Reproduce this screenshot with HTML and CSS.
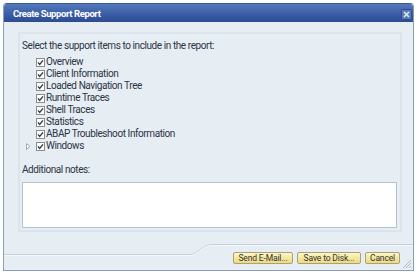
FILE: index.html
```html
<!DOCTYPE html>
<html>
<head>
<meta charset="utf-8">
<link rel="stylesheet" href="styles.css">
</head>
<body>
<div class="dialog">
  <div class="titlebar">
    <span class="title">Create Support Report</span>
    <span class="close">
      <svg width="11" height="11" viewBox="0 0 11 11"><rect x="0.5" y="0.5" width="10" height="10" rx="1" fill="#5a7bb8" stroke="#2f4b8a"/><path d="M3 3 L8 8 M8 3 L3 8" stroke="#dfe7f4" stroke-width="1.6"/></svg>
    </span>
  </div>
  <div class="body">
    <div class="frame">
      <div class="prompt">Select the support items to include in the report:</div>
      <ul class="items">
        <li><span class="exp"></span><span class="cb"><svg width="9" height="9" viewBox="0 0 9 9"><rect x="0.5" y="0.5" width="8" height="8" fill="#fff" stroke="#8c8c8c"/><path d="M2 4.4 L3.7 6.4 L7 2.4" stroke="#333" stroke-width="1.3" fill="none"/></svg></span>Overview</li>
        <li><span class="exp"></span><span class="cb"><svg width="9" height="9" viewBox="0 0 9 9"><rect x="0.5" y="0.5" width="8" height="8" fill="#fff" stroke="#8c8c8c"/><path d="M2 4.4 L3.7 6.4 L7 2.4" stroke="#333" stroke-width="1.3" fill="none"/></svg></span>Client Information</li>
        <li><span class="exp"></span><span class="cb"><svg width="9" height="9" viewBox="0 0 9 9"><rect x="0.5" y="0.5" width="8" height="8" fill="#fff" stroke="#8c8c8c"/><path d="M2 4.4 L3.7 6.4 L7 2.4" stroke="#333" stroke-width="1.3" fill="none"/></svg></span>Loaded Navigation Tree</li>
        <li><span class="exp"></span><span class="cb"><svg width="9" height="9" viewBox="0 0 9 9"><rect x="0.5" y="0.5" width="8" height="8" fill="#fff" stroke="#8c8c8c"/><path d="M2 4.4 L3.7 6.4 L7 2.4" stroke="#333" stroke-width="1.3" fill="none"/></svg></span>Runtime Traces</li>
        <li><span class="exp"></span><span class="cb"><svg width="9" height="9" viewBox="0 0 9 9"><rect x="0.5" y="0.5" width="8" height="8" fill="#fff" stroke="#8c8c8c"/><path d="M2 4.4 L3.7 6.4 L7 2.4" stroke="#333" stroke-width="1.3" fill="none"/></svg></span>Shell Traces</li>
        <li><span class="exp"></span><span class="cb"><svg width="9" height="9" viewBox="0 0 9 9"><rect x="0.5" y="0.5" width="8" height="8" fill="#fff" stroke="#8c8c8c"/><path d="M2 4.4 L3.7 6.4 L7 2.4" stroke="#333" stroke-width="1.3" fill="none"/></svg></span>Statistics</li>
        <li><span class="exp"></span><span class="cb"><svg width="9" height="9" viewBox="0 0 9 9"><rect x="0.5" y="0.5" width="8" height="8" fill="#fff" stroke="#8c8c8c"/><path d="M2 4.4 L3.7 6.4 L7 2.4" stroke="#333" stroke-width="1.3" fill="none"/></svg></span>ABAP Troubleshoot Information</li>
        <li><span class="exp"><svg width="5" height="7" viewBox="0 0 5 7"><path d="M0.5 0.5 L4 3.5 L0.5 6.5 Z" fill="#fff" stroke="#a6a6a6"/></svg></span><span class="cb"><svg width="9" height="9" viewBox="0 0 9 9"><rect x="0.5" y="0.5" width="8" height="8" fill="#fff" stroke="#8c8c8c"/><path d="M2 4.4 L3.7 6.4 L7 2.4" stroke="#333" stroke-width="1.3" fill="none"/></svg></span>Windows</li>
      </ul>
      <div class="notes-label">Additional notes:</div>
      <div class="notes"></div>
    </div>
  </div>
  <div class="footer">
    <svg class="footer-line" width="409" height="38" viewBox="0 0 409 38"><path d="M0 22.5 H186 C194 22.5 198 12.5 208 12.5 H409" fill="none" stroke="#c3cfdc"/><path d="M0 23.5 H186 C194 23.5 198 13.5 208 13.5 H409" fill="none" stroke="#f6f9fb"/></svg>
    <div class="buttons">
      <button class="btn btn-mail">Send E-Mail...</button>
      <button class="btn btn-save">Save to Disk...</button>
      <button class="btn btn-cancel">Cancel</button>
    </div>
    <svg class="grip" width="10" height="10" viewBox="0 0 10 10"><path d="M9 1 L1 9 M9 4 L4 9 M9 7 L7 9" stroke="#aab7c7" stroke-width="1"/></svg>
  </div>
</div>
</body>
</html>
```
FILE: styles.css
```css
html, body {
  margin: 0;
  padding: 0;
  background: #ffffff;
}
body {
  font-family: Roboto, "Liberation Sans", Arial, sans-serif;
  font-size: 10px;
  color: #2b3544;
}
.dialog {
  margin: 3px 0 0 3px;
  width: 409px;
  height: 266px;
  border: 1px solid #8b9dbb;
  border-top-color: #3a5a9e;
  border-radius: 4px 4px 0 0;
  background: #e6edf3;
  display: flex;
  flex-direction: column;
  overflow: hidden;
  position: relative;
}
.titlebar {
  height: 18px;
  flex: none;
  background: linear-gradient(#5379bb, #3b5ea6 55%, #2c4b93);
  display: flex;
  align-items: center;
  justify-content: space-between;
  padding: 0 1px 0 9px;
}
.title {
  color: #ffffff;
  font-weight: bold;
  font-size: 9.5px;
  letter-spacing: -0.4px;
}
.close {
  display: flex;
  margin-top: 3px;
}
.body {
  padding: 10px 11px 0 14px;
  flex: none;
}
.frame {
  border: 2px solid #dbe4ed;
  padding: 6px 3px 2px 2px;
}
.prompt {
  height: 12px;
  line-height: 12px;
  letter-spacing: -0.42px;
}
.items {
  list-style: none;
  margin: 4px 0 0 0;
  padding: 0;
}
.items li {
  height: 12px;
  line-height: 12px;
  display: flex;
  align-items: center;
  letter-spacing: -0.42px;
}
.exp {
  width: 14px;
  flex: none;
  display: flex;
  align-items: center;
  padding-left: 4px;
  box-sizing: border-box;
}
.cb {
  width: 10px;
  flex: none;
  display: flex;
}
.notes-label {
  margin-top: 12px;
  height: 12px;
  line-height: 12px;
  letter-spacing: -0.42px;
}
.notes {
  margin-top: 6px;
  height: 44px;
  background: #ffffff;
  border: 1px solid #b4c2d2;
}
.footer {
  flex: 1;
  position: relative;
  display: flex;
  justify-content: flex-end;
  align-items: flex-start;
  padding: 20px 13px 0 0;
}
.footer-line {
  position: absolute;
  left: 0;
  top: 0;
}
.buttons {
  display: flex;
  gap: 4px;
  position: relative;
}
.btn {
  height: 12px;
  padding: 0;
  margin: 0;
  border: 1px solid #a9a07a;
  border-radius: 2px;
  background: linear-gradient(#fdf7c9, #f4e79e 50%, #eedb7f);
  font-family: Roboto, "Liberation Sans", Arial, sans-serif;
  font-size: 8.5px;
  line-height: 10px;
  color: #333333;
  letter-spacing: -0.15px;
}
.btn-mail { width: 60px; }
.btn-save { width: 64px; }
.btn-cancel { width: 35px; }
.grip {
  position: absolute;
  right: 1px;
  bottom: 1px;
}
```
